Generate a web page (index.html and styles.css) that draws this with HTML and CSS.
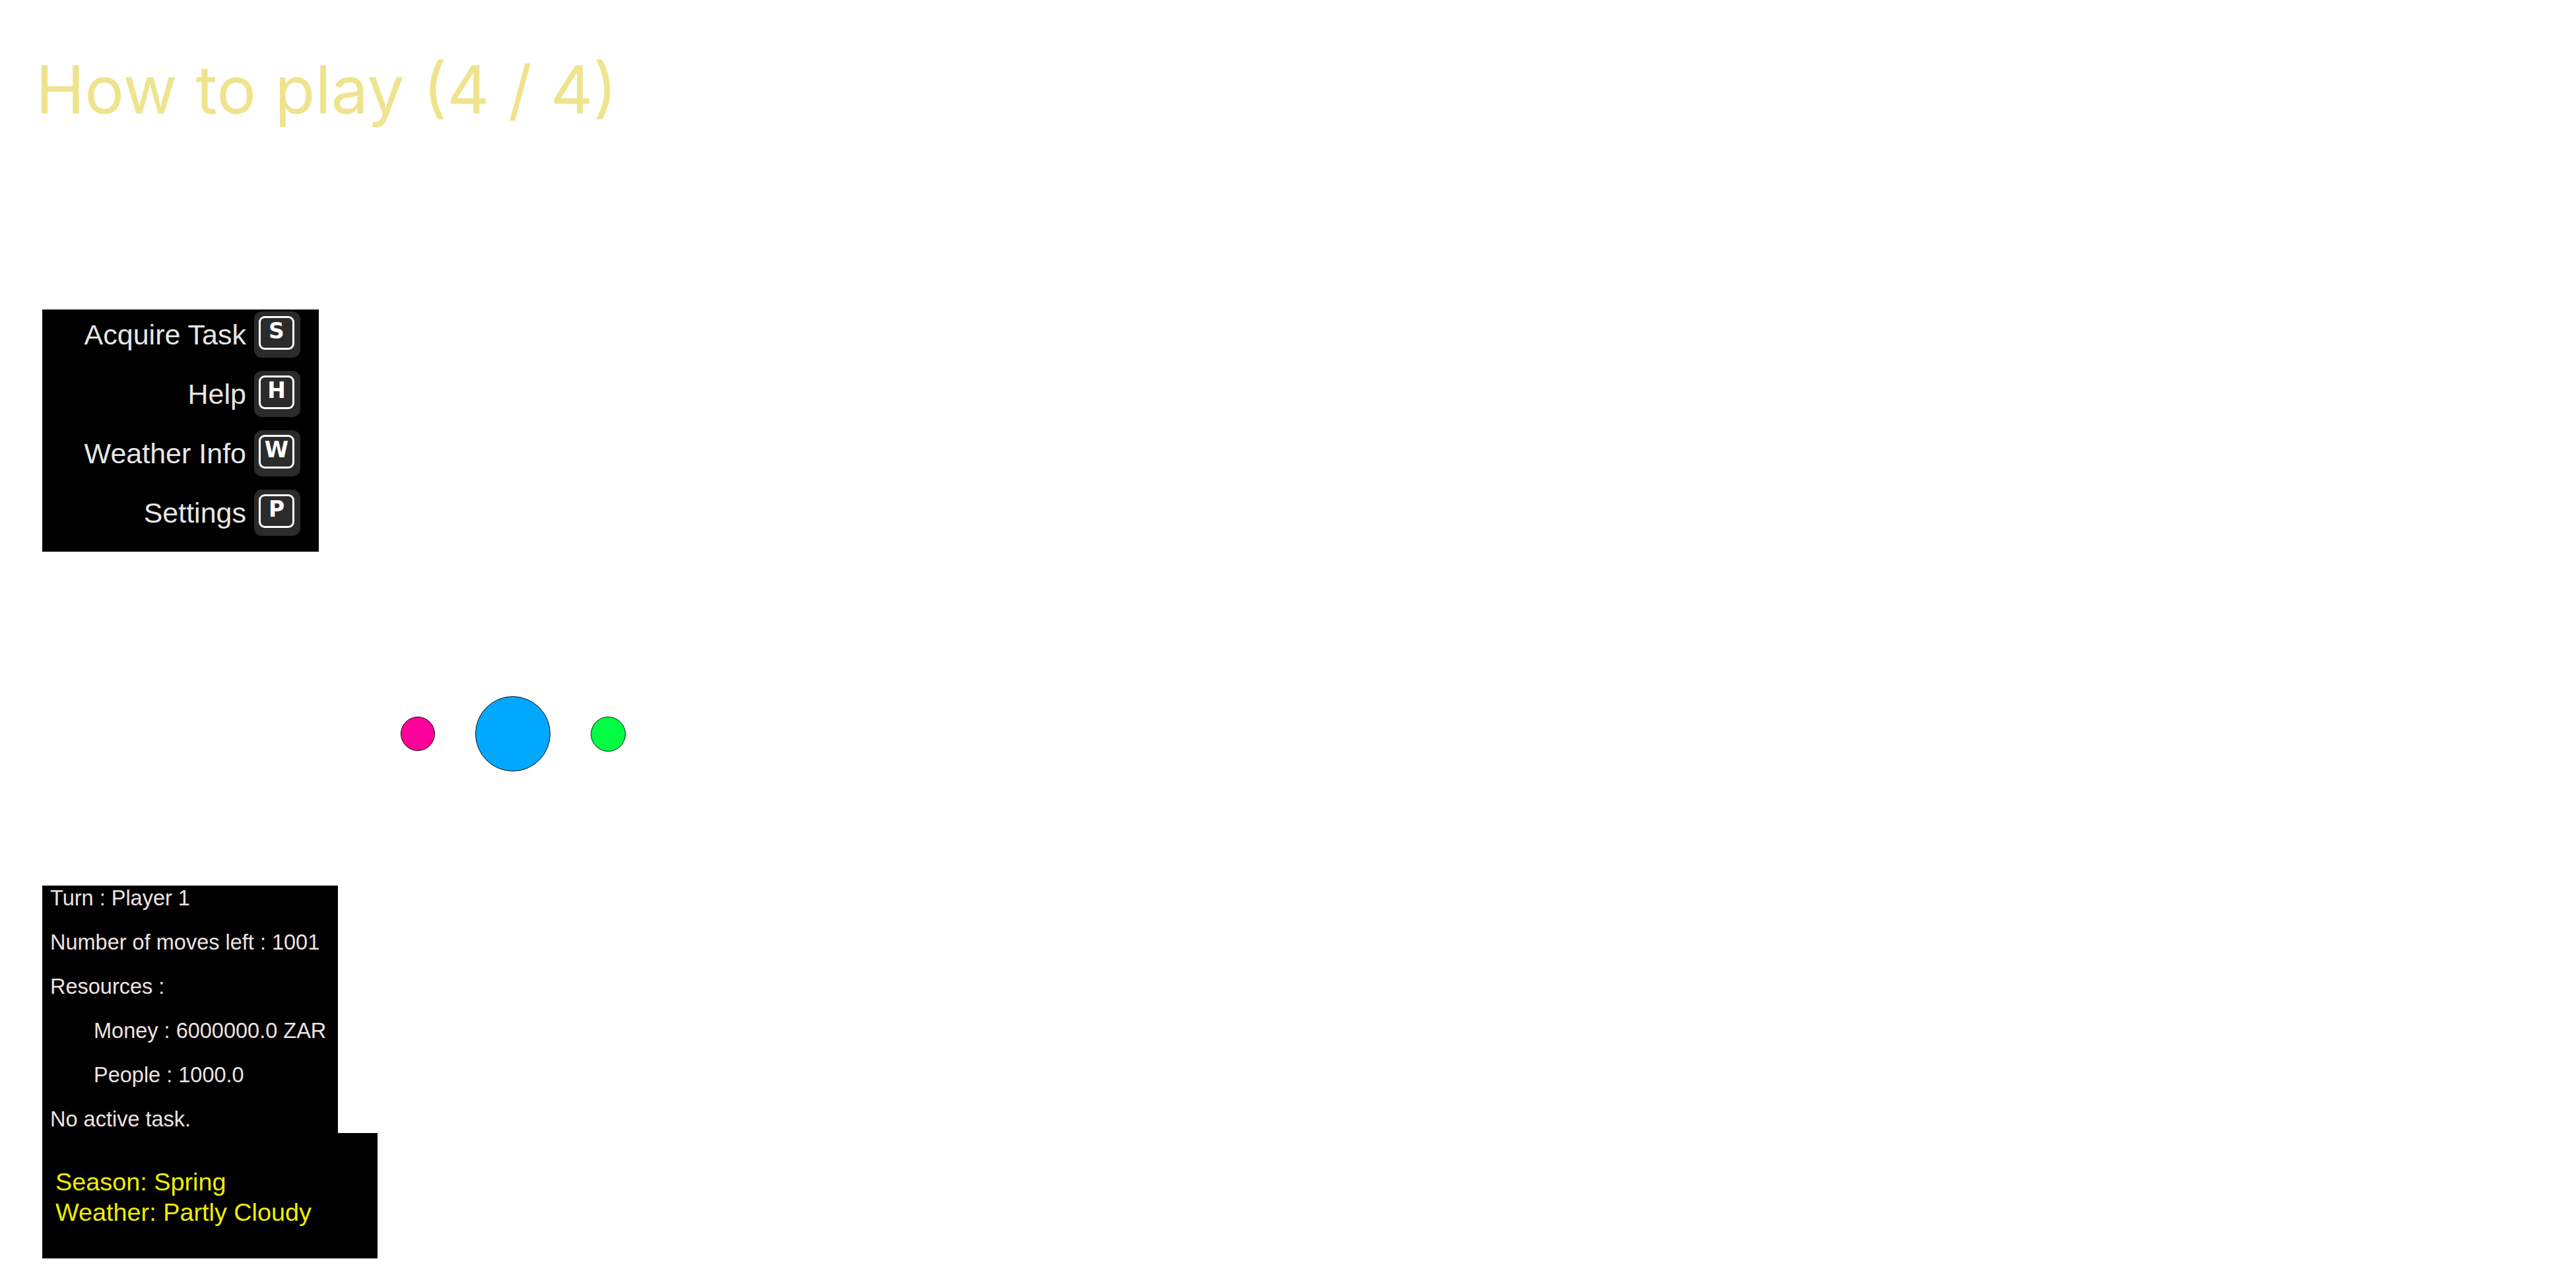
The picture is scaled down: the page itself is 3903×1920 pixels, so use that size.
FILE: index.html
```html
<!DOCTYPE html>
<html lang="en">
<head>
<meta charset="utf-8">
<title>How to play</title>
<link rel="stylesheet" href="styles.css">
</head>
<body>
<div class="page">
  <h1 class="title">How to play (4 / 4)</h1>

  <div class="menu">
    <div class="menu-row"><span class="menu-label">Acquire Task</span><span class="key"><span class="key-inner">S</span></span></div>
    <div class="menu-row"><span class="menu-label">Help</span><span class="key"><span class="key-inner">H</span></span></div>
    <div class="menu-row"><span class="menu-label">Weather Info</span><span class="key"><span class="key-inner">W</span></span></div>
    <div class="menu-row"><span class="menu-label">Settings</span><span class="key"><span class="key-inner">P</span></span></div>
  </div>

  <div class="pieces">
    <span class="piece piece-pink"></span>
    <span class="piece piece-blue"></span>
    <span class="piece piece-green"></span>
  </div>

  <div class="hud">
    <div class="status">
      <div class="status-line">Turn : Player 1</div>
      <div class="status-line">Number of moves left : 1001</div>
      <div class="status-line">Resources :</div>
      <div class="status-line indent">Money : 6000000.0 ZAR</div>
      <div class="status-line indent">People : 1000.0</div>
      <div class="status-line">No active task.</div>
    </div>
    <div class="weather">
      <div class="weather-line">Season: Spring</div>
      <div class="weather-line">Weather: Partly Cloudy</div>
    </div>
  </div>
</div>
</body>
</html>
```

FILE: styles.css
```css
html, body {
  margin: 0;
  padding: 0;
  background: #ffffff;
}

.page {
  width: 3903px;
  height: 1920px;
  display: flex;
  flex-direction: column;
  align-items: flex-start;
  padding-left: 64px;
  box-sizing: border-box;
  overflow: hidden;
}

.title {
  margin: 75px 0 0 -10px;
  font-family: "Inter", "Noto Sans", sans-serif;
  font-weight: 400;
  font-size: 100px;
  line-height: 121px;
  color: #f0e38e;
  white-space: nowrap;
}

.menu {
  margin-top: 273px;
  width: 419px;
  box-sizing: border-box;
  padding: 3px 28px 24px 0;
  background: #000000;
  display: flex;
  flex-direction: column;
  gap: 20px;
}

.menu-row {
  height: 70px;
  display: flex;
  align-items: center;
  justify-content: flex-end;
  gap: 12px;
}

.menu-label {
  font-family: "Liberation Sans", Arial, sans-serif;
  font-size: 43px;
  color: #e6e6e6;
  white-space: nowrap;
}

.key {
  width: 70px;
  height: 70px;
  box-sizing: border-box;
  padding: 7px 9px 12px 7px;
  background: #2b2b2b;
  border-radius: 12px;
  display: flex;
}

.key-inner {
  flex: 1;
  border: 3px solid #ffffff;
  border-radius: 9px;
  display: flex;
  align-items: center;
  justify-content: center;
  padding-bottom: 7px;
  font-family: "DejaVu Sans", sans-serif;
  font-weight: 700;
  font-size: 33px;
  line-height: 1;
  color: #ffffff;
}

.pieces {
  margin-top: 219px;
  margin-left: 543px;
  height: 114px;
  display: flex;
  align-items: center;
  gap: 61px;
}

.piece {
  display: block;
  border: 1px solid #111111;
  border-radius: 50%;
  box-sizing: border-box;
}

.piece-pink {
  width: 52px;
  height: 52px;
  background: #ff009a;
}

.piece-blue {
  width: 114px;
  height: 114px;
  background: #00a8ff;
}

.piece-green {
  width: 53px;
  height: 53px;
  background: #00ff44;
}

.hud {
  margin-top: 173px;
  display: flex;
  flex-direction: column;
  align-items: flex-start;
}

.status {
  width: 448px;
  box-sizing: border-box;
  padding: 0 0 2px 12px;
  background: #000000;
  display: flex;
  flex-direction: column;
  gap: 29px;
}

.status-line {
  font-family: "Liberation Sans", Arial, sans-serif;
  font-size: 32.5px;
  line-height: 38px;
  color: #efe2e2;
  white-space: nowrap;
}

.status-line.indent {
  padding-left: 66px;
}

.weather {
  width: 508px;
  height: 190px;
  box-sizing: border-box;
  padding: 51px 0 0 20px;
  background: #000000;
}

.weather-line {
  font-family: "Liberation Sans", Arial, sans-serif;
  font-size: 37.8px;
  line-height: 46px;
  color: #eeee00;
  white-space: nowrap;
}
```
